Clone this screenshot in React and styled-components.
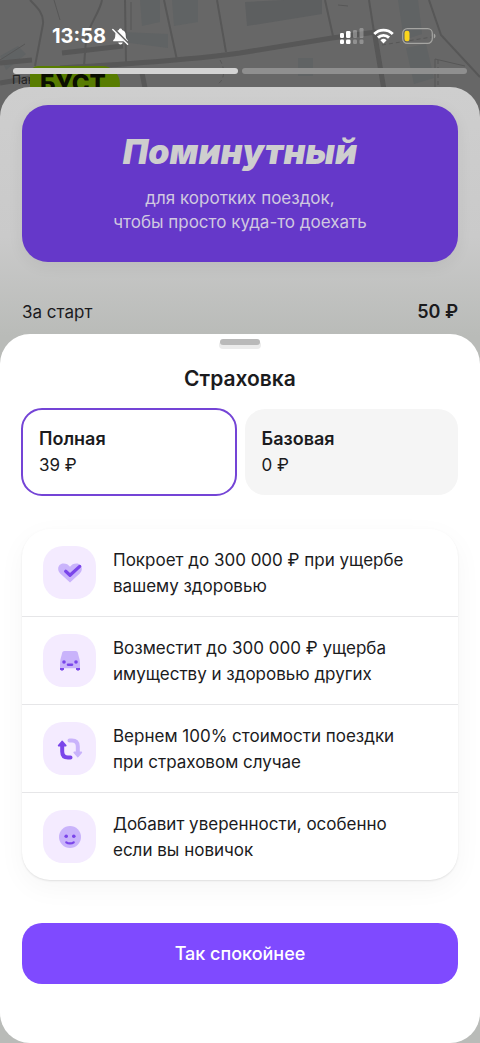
import React, { useState } from "react";
import styled, { createGlobalStyle } from "styled-components";

const plans = [
  { id: "full", name: "Полная", price: "39 ₽" },
  { id: "base", name: "Базовая", price: "0 ₽" },
];

const benefits = [
  { icon: <HeartIcon />, lines: ["Покроет до 300 000 ₽ при ущербе", "вашему здоровью"] },
  { icon: <CarIcon />, lines: ["Возместит до 300 000 ₽ ущерба", "имуществу и здоровью других"] },
  { icon: <ReturnIcon />, lines: ["Вернем 100% стоимости поездки", "при страховом случае"] },
  { icon: <SmileIcon />, lines: ["Добавит уверенности, особенно", "если вы новичок"] },
];

const App = () => {
  const [selected, setSelected] = useState("full");

  return (
    <Screen>
      <GlobalStyle />
      <MapLayer>
        <MapDrawing />
        <StreetName>Пан</StreetName>
        <BoostLabel>БУСТ</BoostLabel>
      </MapLayer>

      <StatusBar>
        <StatusGroup>
          <Time>13:58</Time>
          <BellOffIcon />
        </StatusGroup>
        <StatusGroup>
          <SignalIcon />
          <WifiIcon />
          <BatteryIcon />
        </StatusGroup>
      </StatusBar>
      <Stories>
        <StoryBar $active />
        <StoryBar />
      </Stories>

      <TariffSheet>
        <TariffCard>
          <TariffTitle>Поминутный</TariffTitle>
          <TariffText>
            для коротких поездок,
            <br />
            чтобы просто куда-то доехать
          </TariffText>
        </TariffCard>
        <PriceRow>
          <span>За старт</span>
          <Price>50 ₽</Price>
        </PriceRow>

        <InsuranceSheet>
          <Handle />
          <SheetTitle>Страховка</SheetTitle>
          <Plans>
            {plans.map((plan) => (
              <PlanButton
                key={plan.id}
                type="button"
                aria-pressed={selected === plan.id}
                $active={selected === plan.id}
                onClick={() => setSelected(plan.id)}
              >
                <PlanName>{plan.name}</PlanName>
                <span>{plan.price}</span>
              </PlanButton>
            ))}
          </Plans>
          <BenefitList>
            {benefits.map(({ icon, lines }) => (
              <Benefit key={lines[0]}>
                <IconBox>{icon}</IconBox>
                <BenefitText>
                  {lines[0]}
                  <br />
                  {lines[1]}
                </BenefitText>
              </Benefit>
            ))}
          </BenefitList>
          <SubmitButton type="button">Так спокойнее</SubmitButton>
        </InsuranceSheet>
      </TariffSheet>
    </Screen>
  );
};

export default App;

function MapDrawing() {
  return (
    <svg width="480" height="130" viewBox="0 0 480 130" preserveAspectRatio="xMidYMin slice" aria-hidden="true">
      <rect width="480" height="130" fill="#676767" />
      <g fill="#606364">
        <path d="M140 0h20v22l-18 4zM172 0h26v22l-24 4zM122 32l46 2v14l-46-6z" />
        <path d="M398 0h20l4 34-18 6zM406 48l20-4 8 34-20 6z" />
        <path d="M298 58h15v18h-15zM0 56l18-10 8 8-20 16z" />
      </g>
      <path d="M245 2l77-4v16l-75 12z" fill="#5d5f60" />
      <g fill="none" stroke="#575757">
        <path d="M0 63l32-3M62 53l61-7M0 83l30-5" strokeWidth="5" />
        <path d="M60 68c70-4 130-8 180-15l92-15 44-6" strokeWidth="5" />
        <path d="M374 30l10 60M142 73l4 20" strokeWidth="5" />
        <path d="M30 0c8 8 14 14 13 24l-8 42M102 0c-2 12-14 26-16 40l-2 26" strokeWidth="2" />
        <path d="M125 0l1 62M164 0l13 60M217 0l9 52M325 0l8 36M369 0l5 32M429 0l12 35 39 42" strokeWidth="2" />
        <path d="M131 2v28M54 0l6 20M435 92v-33l30 7M0 60l25-16M338 5l10 1" strokeWidth="1" />
        <path d="M382 45l50-8M438 60v26M220 60c6 10 4 20-2 24" strokeWidth="1" strokeDasharray="4 3" />
      </g>
    </svg>
  );
}

function BellOffIcon() {
  return (
    <svg width="17" height="17" viewBox="0 0 17 17" aria-hidden="true">
      <path
        d="M8.500.5c.9 0 1.500.6 1.600 1.400 2.400.7 3.600 2.500 3.600 5 0 2.700.6 3.900 2.100 5.300v1.100H1.200v-1.100c1.500-1.400 2.100-2.600 2.100-5.300 0-2.500 1.200-4.300 3.600-5C7 1.100 7.600.5 8.500.5zM6.300 14.400h4.400c-.2 1.300-1 2-2.200 2s-2-.7-2.200-2z"
        fill="#fff"
      />
      <path d="M1.600 1L17 16.400" stroke="#676767" strokeWidth="2.600" />
      <path d="M.8 1.400l14.800 14.800" stroke="#fff" strokeWidth="1.400" strokeLinecap="round" />
    </svg>
  );
}

function SignalIcon() {
  return (
    <svg width="26" height="18" viewBox="0 0 26 18" fill="#fff" aria-hidden="true">
      <rect x="1" y="6" width="4" height="5" rx="1.200" />
      <rect x="7" y="4" width="4.500" height="7" rx="1.200" />
      <rect x="1" y="12.500" width="4" height="4.500" rx="1.200" />
      <rect x="7" y="12.500" width="4.500" height="4.500" rx="1.200" />
      <g opacity=".28">
        <rect x="14" y="3" width="4" height="8" rx="1.200" />
        <rect x="20.500" y="1" width="4" height="10" rx="1.200" />
        <rect x="14" y="12.500" width="4" height="4.500" rx="1.200" />
        <rect x="20.500" y="12.500" width="4" height="4.500" rx="1.200" />
      </g>
    </svg>
  );
}

function WifiIcon() {
  return (
    <svg width="21" height="16" viewBox="0 0 22 16" fill="none" stroke="#fff" strokeWidth="3" aria-hidden="true">
      <path d="M1.300 5.800a13.700 13.700 0 0 1 19.400 0" />
      <path d="M5.200 9.700a8.200 8.200 0 0 1 11.600 0" />
      <path d="M11 15.800L7.800 12.500a4.600 4.600 0 0 1 6.400 0z" fill="#fff" stroke="none" />
    </svg>
  );
}

function BatteryIcon() {
  return (
    <svg width="34" height="16" viewBox="0 0 34 16" aria-hidden="true">
      <rect x=".7" y=".7" width="29.600" height="14.600" rx="4.600" fill="none" stroke="#a5a5a2" strokeWidth="1.200" />
      <path d="M31.800 5.500c2.200.7 2.200 4.300 0 5z" fill="#a5a5a2" />
      <rect x="2.500" y="2.700" width="5" height="10.600" rx="2.300" fill="#fad51c" />
    </svg>
  );
}

function HeartIcon() {
  return (
    <svg width="26" height="26" viewBox="0 0 26 26" aria-hidden="true">
      <path
        d="M13 22.600L3.200 13.500C-.6 9.800 1.200 3.500 6.500 3.500c2.800 0 5 1.200 6.500 3.300 1.500-2.100 3.700-3.300 6.500-3.300 5.300 0 7.100 6.300 3.300 10z"
        fill="#c9b3fb"
      />
      <path d="M8.700 11.300l4.300 3.900 9.700-8.800" fill="none" stroke="#7a45ea" strokeWidth="3.300" strokeLinecap="round" strokeLinejoin="round" />
    </svg>
  );
}

function CarIcon() {
  return (
    <svg width="26" height="26" viewBox="0 0 26 26" aria-hidden="true">
      <path d="M3 19.500h4V21c0 1.900-4 1.900-4 0zM19 19.500h4V21c0 1.900-4 1.900-4 0z" fill="#7a45ea" />
      <path d="M7.500 3h11c1.300 0 2 .7 2.300 1.800l1.900 7.200c.3 2.600.4 5.600.3 8.300H3c-.1-2.700 0-5.700.3-8.300l1.900-7.200C5.500 3.700 6.200 3 7.500 3z" fill="#c9b3fb" />
      <path d="M3 20h4v1c0 1.900-4 1.900-4 0zM19 20h4v1c0 1.900-4 1.900-4 0z" fill="#7a45ea" />
      <circle cx="7" cy="14" r="1.800" fill="#7a45ea" />
      <circle cx="19" cy="14" r="1.800" fill="#7a45ea" />
      <rect x="9.700" y="15.600" width="6.600" height="2.300" rx="1.100" fill="#7a45ea" />
    </svg>
  );
}

function ReturnIcon() {
  return (
    <svg width="26" height="26" viewBox="0 0 26 26" fill="none" aria-hidden="true">
      <g stroke="#c9b3fb" fill="#c9b3fb">
        <path d="M12.500 4.500H15c4 0 5.800 2 5.800 6v6" fill="none" strokeWidth="4" strokeLinecap="round" />
        <path d="M17.300 16.500h7l-3.500 4z" strokeWidth="1.800" strokeLinejoin="round" />
      </g>
      <g stroke="#7a45ea" fill="#7a45ea">
        <path d="M13.500 21.500H11c-4 0-5.800-2-5.800-6v-6" fill="none" strokeWidth="4" strokeLinecap="round" />
        <path d="M1.700 9.500h7l-3.500-4z" strokeWidth="1.800" strokeLinejoin="round" />
      </g>
    </svg>
  );
}

function SmileIcon() {
  return (
    <svg width="26" height="26" viewBox="0 0 26 26" aria-hidden="true">
      <circle cx="13" cy="13" r="11" fill="#c9b3fb" />
      <circle cx="9.200" cy="12.300" r="1.800" fill="#7a45ea" />
      <circle cx="16.800" cy="12.300" r="1.800" fill="#7a45ea" />
      <path d="M9.300 18.300c1.800 1.500 5.600 1.500 7.400 0" fill="none" stroke="#7a45ea" strokeWidth="2.200" strokeLinecap="round" />
    </svg>
  );
}

const GlobalStyle = createGlobalStyle`
  * {
    box-sizing: border-box;
  }
  body {
    margin: 0;
    font-family: Inter, "Liberation Sans", sans-serif;
    font-size: 17px;
    color: #1b1b1d;
  }
  button {
    font: inherit;
    color: inherit;
    border: 0;
    cursor: pointer;
  }
`;

const Screen = styled.div`
  position: relative;
  min-height: 100vh;
  display: flex;
  flex-direction: column;
  background-color: #676767;
`;

const MapLayer = styled.div`
  position: absolute;
  top: 0;
  left: 0;
  right: 0;
  height: 130px;
  overflow: hidden;

  svg {
    display: block;
    width: 100%;
  }
`;
const StreetName = styled.span`
  position: absolute;
  top: 72px;
  left: 12px;
  font-size: 12px;
  line-height: 16px;
  color: #222;
`;
const BoostLabel = styled.span`
  position: absolute;
  top: 66px;
  left: 30px;
  padding: 5px 14px 5px 10px;
  border-radius: 8px 18px 18px 8px;
  background-color: #587d00;
  color: #0b0f00;
  font-size: 24px;
  font-weight: 800;
  line-height: 26px;
`;

const StatusBar = styled.header`
  position: relative;
  display: flex;
  align-items: center;
  justify-content: space-between;
  height: 68px;
  padding: 4px 44px 0 52px;
`;
const StatusGroup = styled.div`
  display: flex;
  align-items: center;
  gap: 8px;

  &:first-child {
    gap: 6px;
  }
`;
const Time = styled.span`
  color: #fff;
  font-size: 20px;
  font-weight: 700;
  line-height: 24px;
`;

const Stories = styled.div`
  position: relative;
  display: flex;
  gap: 4px;
  padding: 0 13px;
`;
const StoryBar = styled.div`
  flex: 1;
  height: 6px;
  border-radius: 3px;
  background-color: ${({ $active }) => ($active ? "#d3d3d3" : "#8f8f8f")};
`;

const TariffSheet = styled.main`
  position: relative;
  flex: 1;
  display: flex;
  flex-direction: column;
  margin-top: 13px;
  padding-top: 18px;
  border-radius: 30px 30px 0 0;
  background: linear-gradient(#cecece 0, #cacaca 150px, #b9bbb8 250px);
`;
const TariffCard = styled.section`
  margin: 0 22px;
  padding: 26px 16px 28px;
  border-radius: 26px;
  background-color: #6538c9;
  box-shadow: 0 4px 16px rgba(0, 0, 0, 0.06);
  color: #d0c8e0;
  text-align: center;
`;
const TariffTitle = styled.h1`
  margin: 0 0 13px;
  color: #cecece;
  font-size: 34px;
  font-style: italic;
  font-weight: 900;
  line-height: 42px;
`;
const TariffText = styled.p`
  margin: 0;
  line-height: 24px;
`;
const PriceRow = styled.div`
  display: flex;
  justify-content: space-between;
  padding: 38px 22px 10px;
  line-height: 24px;
`;
const Price = styled.span`
  font-size: 18px;
  font-weight: 600;
`;

const InsuranceSheet = styled.section`
  flex: 1;
  display: flex;
  flex-direction: column;
  padding: 5px 22px 59px;
  border-radius: 30px;
  background-color: #fff;
`;
const Handle = styled.div`
  align-self: center;
  width: 40px;
  height: 6px;
  border-radius: 3px;
  background-color: #b9b9b9;
  box-shadow: 0 3px 0 1px #ebebeb;
`;
const SheetTitle = styled.h2`
  margin: 20px 0 16px;
  font-size: 21px;
  font-weight: 600;
  line-height: 28px;
  text-align: center;
`;
const Plans = styled.div`
  display: flex;
  gap: 9px;
`;
const PlanButton = styled.button`
  flex: 1;
  display: flex;
  flex-direction: column;
  padding: 16px 17px;
  border-radius: 20px;
  outline: ${({ $active }) => ($active ? "2px solid #7444d6" : "none")};
  outline-offset: -1px;
  background-color: ${({ $active }) => ($active ? "#fff" : "#f5f5f5")};
  line-height: 27px;
  text-align: left;
`;
const PlanName = styled.span`
  font-size: 18px;
  font-weight: 600;
`;

const BenefitList = styled.ul`
  margin: 34px 0 43px;
  padding: 0;
  border-radius: 28px;
  box-shadow: 0 1px 2px rgba(0, 0, 0, 0.1), 0 8px 28px rgba(0, 0, 0, 0.04);
  list-style: none;
`;
const Benefit = styled.li`
  box-sizing: content-box;
  display: flex;
  align-items: center;
  gap: 17px;
  min-height: 87px;
  padding: 0 16px 0 21px;

  & + & {
    border-top: 1px solid #e6e6e8;
  }
`;
const IconBox = styled.div`
  display: flex;
  align-items: center;
  justify-content: center;
  flex-shrink: 0;
  width: 53px;
  height: 53px;
  border-radius: 20px;
  background-color: #f4ebff;
`;
const BenefitText = styled.p`
  margin: 0;
  line-height: 26px;
`;

const SubmitButton = styled.button`
  padding: 18px;
  border-radius: 20px;
  background-color: #7f4aff;
  color: #fff;
  font-size: 18px;
  font-weight: 500;
  line-height: 25px;
`;
